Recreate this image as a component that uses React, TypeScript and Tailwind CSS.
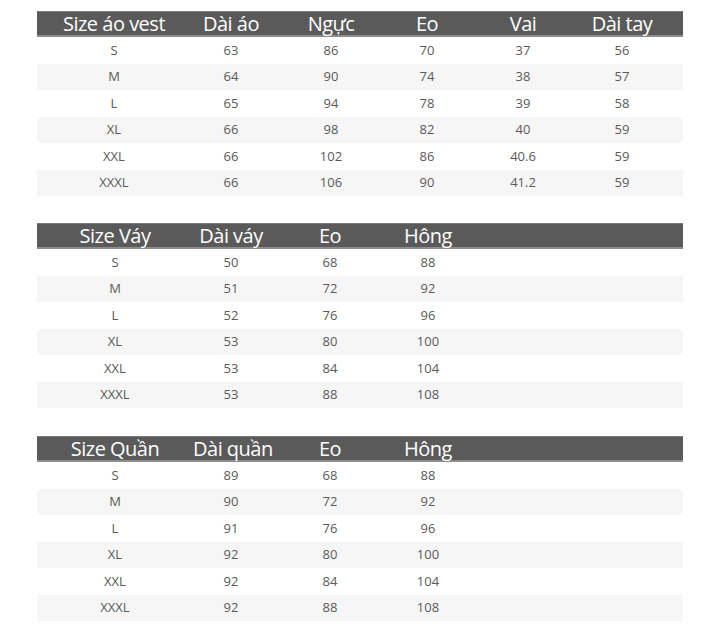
import React from "react";

type Table = { cols: number[]; head: string[]; rows: string[][] };

const t1: Table = {
  cols: [154, 80, 120, 72, 120, 78],
  head: ["Size áo vest", "Dài áo", "Ngực", "Eo", "Vai", "Dài tay"],
  rows: [
    ["S", "63", "86", "70", "37", "56"],
    ["M", "64", "90", "74", "38", "57"],
    ["L", "65", "94", "78", "39", "58"],
    ["XL", "66", "98", "82", "40", "59"],
    ["XXL", "66", "102", "86", "40.6", "59"],
    ["XXXL", "66", "106", "90", "41.2", "59"],
  ],
};

const t2: Table = {
  cols: [156, 76, 122, 74],
  head: ["Size Váy", "Dài váy", "Eo", "Hông"],
  rows: [
    ["S", "50", "68", "88"],
    ["M", "51", "72", "92"],
    ["L", "52", "76", "96"],
    ["XL", "53", "80", "100"],
    ["XXL", "53", "84", "104"],
    ["XXXL", "53", "88", "108"],
  ],
};

const t3: Table = {
  cols: [156, 76, 122, 74],
  head: ["Size Quần", "Dài quần", "Eo", "Hông"],
  rows: [
    ["S", "89", "68", "88"],
    ["M", "90", "72", "92"],
    ["L", "91", "76", "96"],
    ["XL", "92", "80", "100"],
    ["XXL", "92", "84", "104"],
    ["XXXL", "92", "88", "108"],
  ],
};

function SizeTable({ t }: { t: Table }) {
  return (
    <div className="w-[646px]">
      <div className="flex h-[26px] items-center bg-[#5a5a5a] border-t border-[#7a7a7a] border-b-2 border-b-[#8e8e8e] text-white text-[20px] tracking-[-0.5px] leading-none">
        {t.head.map((h, i) => (
          <div key={i} style={{ width: t.cols[i] }} className="shrink-0 text-center whitespace-nowrap">
            {h}
          </div>
        ))}
      </div>
      {t.rows.map((r, ri) => (
        <div
          key={ri}
          className={`flex h-[26.5px] items-center text-[13px] text-[#5a5a5a] ${ri % 2 === 1 ? "bg-[#f6f6f6]" : "bg-white"}`}
        >
          {r.map((c, ci) => (
            <div key={ci} style={{ width: t.cols[ci] }} className="shrink-0 text-center">
              {c}
            </div>
          ))}
        </div>
      ))}
    </div>
  );
}

export default function App() {
  return (
    <div className="w-[720px] h-[633px] bg-white pt-[11px] px-[37px]" style={{ fontFamily: '"Open Sans", "Noto Sans", sans-serif' }}>
      <SizeTable t={t1} />
      <div className="h-[27px]" />
      <SizeTable t={t2} />
      <div className="h-[28px]" />
      <SizeTable t={t3} />
    </div>
  );
}
